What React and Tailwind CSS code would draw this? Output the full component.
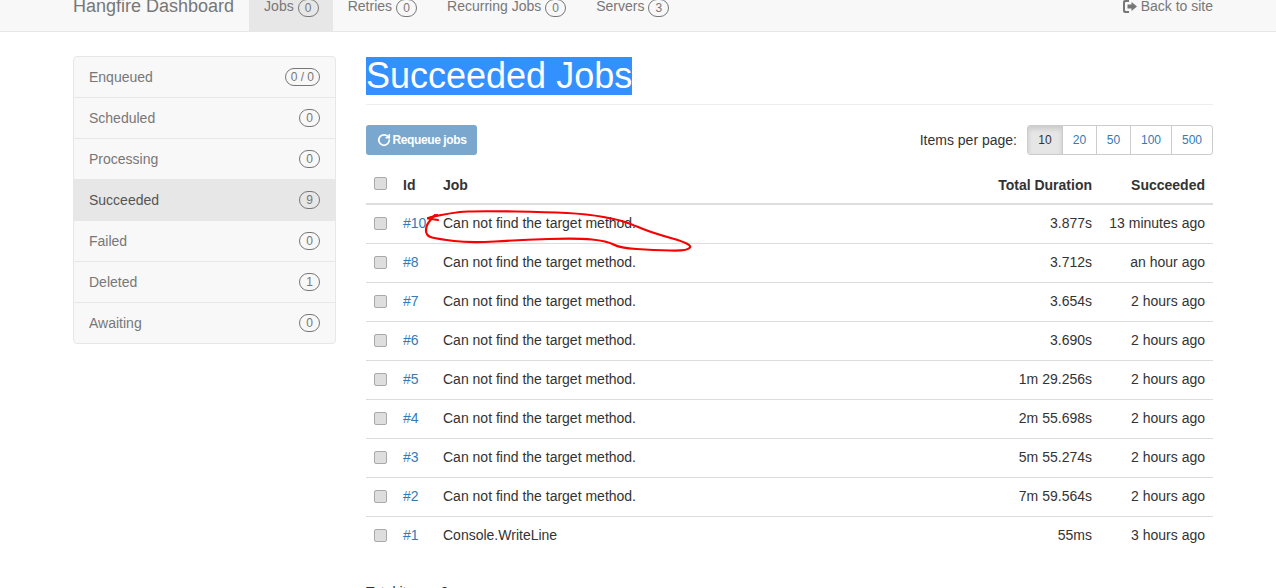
import { RotateCw } from 'lucide-react';

const navItems = [
  { label: 'Jobs', count: 0, active: true },
  { label: 'Retries', count: 0 },
  { label: 'Recurring Jobs', count: 0 },
  { label: 'Servers', count: 3 },
];

const sideItems = [
  { label: 'Enqueued', count: '0 / 0' },
  { label: 'Scheduled', count: 0 },
  { label: 'Processing', count: 0 },
  { label: 'Succeeded', count: 9, active: true },
  { label: 'Failed', count: 0 },
  { label: 'Deleted', count: 1 },
  { label: 'Awaiting', count: 0 },
];

const jobs = [
  { id: 10, name: 'Can not find the target method.', duration: '3.877s', when: '13 minutes ago' },
  { id: 8, name: 'Can not find the target method.', duration: '3.712s', when: 'an hour ago' },
  { id: 7, name: 'Can not find the target method.', duration: '3.654s', when: '2 hours ago' },
  { id: 6, name: 'Can not find the target method.', duration: '3.690s', when: '2 hours ago' },
  { id: 5, name: 'Can not find the target method.', duration: '1m 29.256s', when: '2 hours ago' },
  { id: 4, name: 'Can not find the target method.', duration: '2m 55.698s', when: '2 hours ago' },
  { id: 3, name: 'Can not find the target method.', duration: '5m 55.274s', when: '2 hours ago' },
  { id: 2, name: 'Can not find the target method.', duration: '7m 59.564s', when: '2 hours ago' },
  { id: 1, name: 'Console.WriteLine', duration: '55ms', when: '3 hours ago' },
];

const pageSizes = [
  { n: 10, w: 'w-[34px]' },
  { n: 20, w: 'w-[34px]' },
  { n: 50, w: 'w-[34px]' },
  { n: 100, w: 'w-[41px]' },
  { n: 500, w: 'w-[41px]' },
];

// hand drawn loop around the first row, traced from the screenshot
const penPoints = [
  [428, 218], [453, 212], [483, 211], [547, 212], [587, 214], [620, 220], [633, 225], [653, 233],
  [692, 244], [688, 251], [653, 250], [620, 248], [607, 241], [577, 238], [520, 240], [470, 243],
  [438, 239], [426, 236], [426, 225], [435, 215],
];

const smoothPath = (pts) => {
  let d = `M${pts[0][0]} ${pts[0][1]}`;
  for (let i = 1; i < pts.length - 1; i++) {
    const mx = (pts[i][0] + pts[i + 1][0]) / 2;
    const my = (pts[i][1] + pts[i + 1][1]) / 2;
    d += ` Q${pts[i][0]} ${pts[i][1]} ${mx} ${my}`;
  }
  const last = pts[pts.length - 1];
  return `${d} L${last[0]} ${last[1]}`;
};

const Badge = ({ children }) => (
  <span className="inline-block h-[18px] min-w-[21px] rounded-[10px] border border-[#777] px-[5px] text-center text-[12px] leading-[16px] text-[#777]">
    {children}
  </span>
);

const Check = () => (
  <input
    type="checkbox"
    className="m-0 block h-[13px] w-[13px] appearance-none rounded-[2px] border border-[#a9a9a9] bg-[#dedede]"
  />
);

const App = () => {
  return (
    <div className="relative h-[588px] overflow-hidden bg-white font-['Liberation_Sans',Arial,sans-serif] text-[14px] leading-[20px] text-[#333]">
      {/* navbar, the page is scrolled down a little so its top is cut off */}
      <nav className="-mt-[19px] h-[51px] border-b border-[#e7e7e7] bg-[#f8f8f8]">
        <div className="ml-[73px] flex w-[1140px] items-start">
          <span className="mr-[15px] py-[15px] text-[18px] leading-[20px] text-[#777]">Hangfire Dashboard</span>
          {navItems.map((item) => (
            <span
              key={item.label}
              className={`flex h-[50px] items-start gap-[4px] py-[15px] pl-[15px] text-[#777] ${item.active ? 'bg-[#e7e7e7] pr-[14px] text-[#555]' : 'pr-[15px]'}`}
            >
              {item.label}
              <span className="pt-[1px]">
                <Badge>{item.count}</Badge>
              </span>
            </span>
          ))}
          <span className="ml-auto flex items-center gap-[4px] py-[15px] text-[#777]">
            <svg width="14" height="13" viewBox="0 0 14 13" fill="#777">
              <path d="M2 0h4v2H3Q2 2 2 3v7q0 1 1 1h3v2H2q-2 0-2-2V2q0-2 2-2z" />
              <path d="M8.500 2l5.500 4.500-5.500 4.500V8.500H4.500v-4h4z" />
            </svg>
            Back to site
          </span>
        </div>
      </nav>

      <div className="ml-[73px] flex w-[1140px] items-start gap-[30px] pt-[25px]">
        {/* sidebar */}
        <div className="-mt-px w-[263px] shrink-0 overflow-hidden rounded-[4px] border border-[#e7e7e7] bg-[#f8f8f8]">
          {sideItems.map((item, i) => (
            <div
              key={item.label}
              className={`flex items-center justify-between border-[#e7e7e7] px-[15px] ${i > 0 ? 'h-[41px] border-t' : 'h-[40px]'} ${item.active ? 'bg-[#e7e7e7] text-[#555]' : 'text-[#777]'}`}
            >
              <span className="-mt-px">{item.label}</span>
              <Badge>{item.count}</Badge>
            </div>
          ))}
        </div>

        {/* main */}
        <div className="min-w-0 flex-1">
          <div className="h-[48px] border-b border-[#eeeeee]">
            <h1 className="inline-block bg-[#3390ff] text-[36px] font-normal leading-[38px] text-white">Succeeded Jobs</h1>
          </div>

          <div className="mt-[20px] flex items-center justify-between">
            <button className="flex h-[30px] w-[111px] items-center justify-center gap-[2px] rounded-[3px] bg-[#7aa7cd] text-[12px] font-bold tracking-[-0.4px] text-white">
              <RotateCw size={14} strokeWidth={3} />
              Requeue jobs
            </button>
            <div className="flex items-center gap-[10px]">
              <span>Items per page:</span>
              <div className="flex h-[30px] overflow-hidden rounded-[3px] border border-[#ccc] text-[12px]">
                {pageSizes.map((p, i) => (
                  <span
                    key={p.n}
                    className={`flex items-center justify-center border-[#ccc] ${p.w} ${i > 0 ? 'border-l' : ''} ${p.n === 10 ? 'border-[#adadad] bg-[#e6e6e6] text-[#333] shadow-[inset_0_3px_5px_rgba(0,0,0,0.125)]' : 'text-[#337ab7]'}`}
                  >
                    {p.n}
                  </span>
                ))}
              </div>
            </div>
          </div>

          <table className="mt-[10px] w-full table-fixed border-collapse">
            <colgroup>
              <col className="w-[29px]" />
              <col className="w-[40px]" />
              <col />
              <col className="w-[150px]" />
              <col className="w-[113px]" />
            </colgroup>
            <thead>
              <tr className="h-[39px] border-b-2 border-[#ddd] font-bold">
                <th className="pb-[2px] pl-[8px] align-middle"><Check /></th>
                <th className="px-[8px] pt-[2px] text-left">Id</th>
                <th className="px-[8px] pt-[2px] text-left">Job</th>
                <th className="px-[8px] pt-[2px] text-right">Total Duration</th>
                <th className="px-[8px] pt-[2px] text-right">Succeeded</th>
              </tr>
            </thead>
            <tbody>
              {jobs.map((job, i) => (
                <tr key={job.id} className={`h-[39px] ${i > 0 ? 'border-t border-[#ddd]' : ''}`}>
                  <td className="pl-[8px]"><Check /></td>
                  <td className="px-[8px] pb-[2px] text-[#337ab7]">#{job.id}</td>
                  <td className="px-[8px] pb-[2px]">{job.name}</td>
                  <td className="px-[8px] pb-[2px] text-right">{job.duration}</td>
                  <td className="whitespace-nowrap px-[8px] pb-[2px] text-right">{job.when}</td>
                </tr>
              ))}
            </tbody>
          </table>

          <div className="mt-[27px]">Total items: 9</div>
        </div>
      </div>

      {/* red pen annotation drawn on top of the screenshot */}
      <svg className="pointer-events-none absolute left-0 top-0" width="1276" height="588" fill="none" stroke="#f60000" strokeWidth="2.2" strokeLinecap="round" strokeLinejoin="round">
        <path d={smoothPath(penPoints)} />
        <path d="M437 215 L428 218.500 L438 220" />
      </svg>
    </div>
  );
};

export default App;
